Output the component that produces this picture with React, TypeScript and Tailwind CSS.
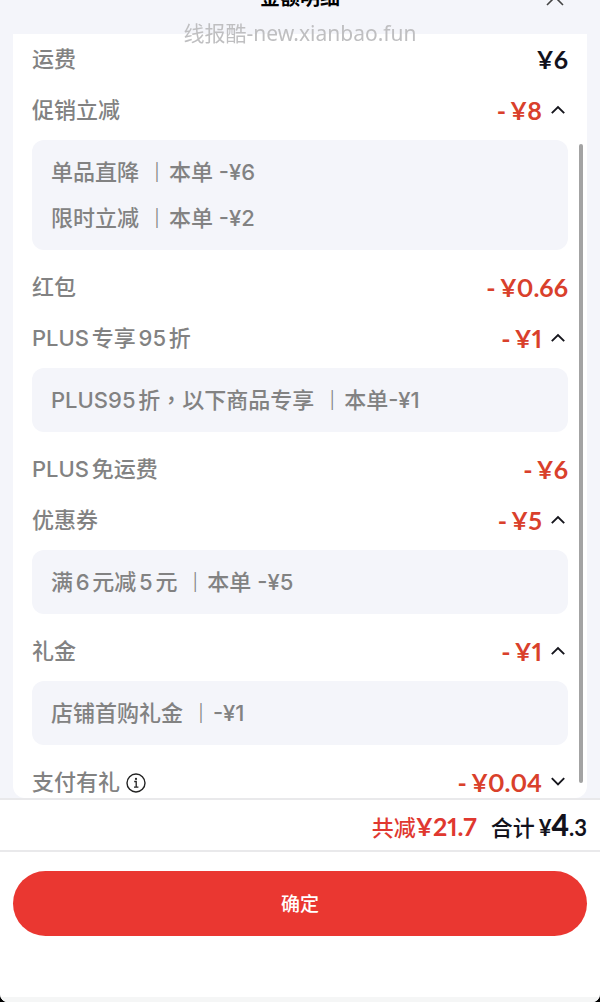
import { useState } from "react";

type Item = {
  label: string;
  amount: string;
  positive?: boolean;
  info?: boolean;
  open?: boolean;
  details?: [string, string][];
};

const items: Item[] = [
  { label: "运费", amount: "¥6", positive: true },
  {
    label: "促销立减",
    amount: "¥8",
    open: true,
    details: [
      ["单品直降", "本单 -¥6"],
      ["限时立减", "本单 -¥2"],
    ],
  },
  { label: "红包", amount: "¥0.66" },
  {
    label: "PLUS专享95折",
    amount: "¥1",
    open: true,
    details: [["PLUS95折，以下商品专享", "本单-¥1"]],
  },
  { label: "PLUS免运费", amount: "¥6" },
  { label: "优惠券", amount: "¥5", open: true, details: [["满6元减5元", "本单 -¥5"]] },
  { label: "礼金", amount: "¥1", open: true, details: [["店铺首购礼金", "-¥1"]] },
  { label: "支付有礼", amount: "¥0.04", info: true, open: false, details: [] },
];

function Chevron({ open }: { open: boolean }) {
  return (
    <svg width="16" height="16" viewBox="0 0 16 16" fill="none" stroke="#15151c" strokeWidth="1.9" aria-hidden="true">
      <path d={open ? "M1.8 10.2 8 4l6.2 6.2" : "M1.8 3.2 8 9.4l6.2-6.2"} />
    </svg>
  );
}

function InfoIcon() {
  return (
    <svg width="20" height="20" viewBox="0 0 20 20" fill="none" stroke="#222" aria-hidden="true">
      <circle cx="10" cy="10" r="9" strokeWidth="1.4" />
      <path d="M8.2 8.5h2v5.6M8 14.2h4.4" strokeWidth="1.3" />
      <circle cx="10" cy="5.9" r="1.1" fill="#222" stroke="none" />
    </svg>
  );
}

function Amount({ item }: { item: Item }) {
  return (
    <span
      className={`flex gap-1 font-[Lato,sans-serif] text-[25px] font-bold proportional-nums ${
        item.positive ? "text-[#12121c]" : "text-[#d9402b]"
      }`}
    >
      {!item.positive && <span>-</span>}
      <span>{item.amount}</span>
    </span>
  );
}

function Row({ item }: { item: Item }) {
  const [open, setOpen] = useState(Boolean(item.open));
  return (
    <li>
      <div className="flex h-[51px] items-center justify-between">
        <span className="flex items-center gap-1.5">
          {item.label}
          {item.info && (
            <button type="button" aria-label="说明">
              <InfoIcon />
            </button>
          )}
        </span>
        {item.details ? (
          <button
            type="button"
            aria-expanded={open}
            onClick={() => setOpen(!open)}
            className="flex items-center gap-2 pr-0.5"
          >
            <Amount item={item} />
            <Chevron open={open} />
          </button>
        ) : (
          <Amount item={item} />
        )}
      </div>
      {open && item.details && item.details.length > 0 && (
        <ul className="mt-1 mb-3 rounded-xl bg-[#f4f5fa] px-[19px] py-[9px]">
          {item.details.map(([name, value]) => (
            <li key={name} lang="zh-TW" className="font-[Inter,'Noto_Sans_CJK_TC',sans-serif] leading-[46px]">
              {name} <span className="px-px font-light">丨</span>
              {value}
            </li>
          ))}
        </ul>
      )}
    </li>
  );
}

export default function App() {
  return (
    <div className="bg-black font-[Inter,'Noto_Sans_CJK_SC',sans-serif] text-[22px] font-medium text-[#828282] [text-autospace:normal]">
      <div className="relative flex h-screen flex-col overflow-hidden rounded-b-lg bg-[#f4f5fa]">
        <header className="grid h-[34px] shrink-0 grid-cols-[1fr_auto_1fr] items-start px-8 text-black">
          <h1 className="col-start-2 -mt-4 text-[20px] leading-[28px] font-bold">金额明细</h1>
          <button type="button" aria-label="关闭" className="-mt-3 mr-1 justify-self-end">
            <svg width="18" height="18" viewBox="0 0 18 18" fill="none" stroke="#444" strokeWidth="1.6" aria-hidden="true">
              <path d="M1 1l16 16M17 1L1 17" />
            </svg>
          </button>
        </header>

        <div className="pointer-events-none absolute inset-x-0 top-[19px] z-10 text-center font-['Noto_Sans','Noto_Sans_CJK_SC',sans-serif] text-[21px] leading-[28px] font-normal text-[#bfbfc1] [text-autospace:no-autospace]">
          线报酷-new.xianbao.fun
        </div>

        <main className="relative mx-[13px] min-h-0 flex-1">
          <ul className="h-full overflow-y-auto rounded-b-xl bg-white px-[19px] [scrollbar-width:none]">
            {items.map((item) => (
              <Row key={item.label} item={item} />
            ))}
          </ul>
          <div className="absolute top-[110px] right-1 bottom-[15px] w-1 rounded-full bg-[#a3a3a3]" />
        </main>

        <footer className="shrink-0 border-b-[5px] border-[#f5f6f6] bg-white">
          <div className="flex h-[54px] items-center justify-end border-y-2 border-[#e9e9eb] px-[13px] pb-0.5">
            <p className="flex items-baseline gap-[14px]">
              <span className="text-[#e0382f]">
                共减
                <span className="font-[Lato,sans-serif] text-[25px] font-bold proportional-nums">¥21.7</span>
              </span>
              <span className="text-[#12121c]">
                合计
                <span className="ml-1 font-[Lato,sans-serif] text-[22px] font-bold">
                  ¥<span className="text-[30px] font-black">4</span>.3
                </span>
              </span>
            </p>
          </div>
          <div className="px-[13px] pt-[19px] pb-[61px]">
            <button type="button" className="h-[65px] w-full rounded-full bg-[#ea3731] pt-1 text-[19px] text-white">
              确定
            </button>
          </div>
        </footer>
      </div>
    </div>
  );
}
